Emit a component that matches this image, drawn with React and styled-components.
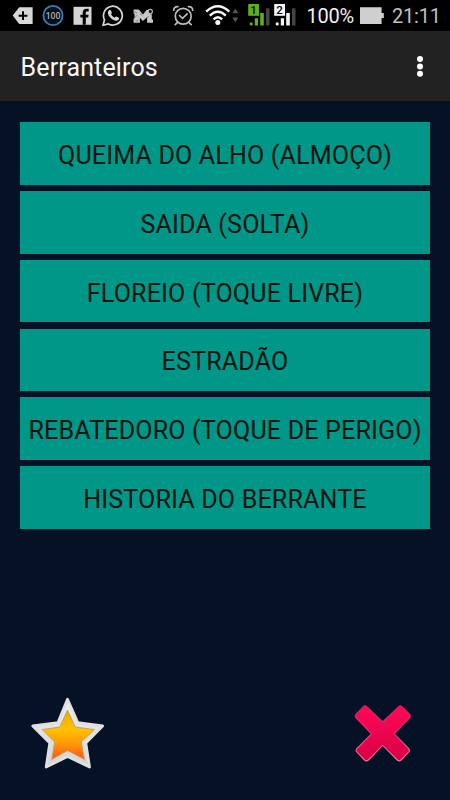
import React from "react";
import styled, { createGlobalStyle } from "styled-components";

const GlobalStyle = createGlobalStyle`
  * { box-sizing: border-box; }
  body { margin: 0; background: #051225; font-family: Roboto, "Liberation Sans", sans-serif; }
`;

const Screen = styled.div`
  width: 450px;
  height: 800px;
  display: flex;
  flex-direction: column;
  overflow: hidden;
  background: #051225;
`;

const StatusBar = styled.header`
  height: 31px;
  flex: none;
  display: flex;
  align-items: center;
  background: #000;
`;

const StatusIcon = styled.svg`
  flex: none;
  display: block;
  height: 31px;
  width: ${(p) => p.$w}px;
  margin-left: ${(p) => p.$gap}px;
`;

const StatusText = styled.span`
  flex: none;
  width: ${(p) => p.$w}px;
  margin-left: ${(p) => p.$gap}px;
  padding-top: 1px;
  font-size: 20px;
  line-height: 31px;
  letter-spacing: ${(p) => p.$track || 0}px;
  white-space: nowrap;
  color: ${(p) => p.$color};
`;

const AppBar = styled.div`
  height: 70px;
  flex: none;
  display: flex;
  align-items: center;
  justify-content: space-between;
  padding: 3px 24px 0 20.5px;
  background: #222;
`;

const Title = styled.h1`
  margin: 0;
  font-size: 25px;
  line-height: 30px;
  font-weight: 400;
  letter-spacing: 0.15px;
  color: #f8f8f8;
`;

const MenuButton = styled.button`
  display: block;
  padding: 0;
  border: 0;
  background: none;
  svg { display: block; }
`;

const List = styled.main`
  display: flex;
  flex-direction: column;
  gap: 6.25px;
  padding: 21.3px 20px 0;
`;

const ListButton = styled.button`
  height: 62.5px;
  padding: 5px 0 0;
  border: 0;
  background: #009688;
  color: #04140f;
  font-family: inherit;
  font-size: 25px;
  line-height: 30px;
  letter-spacing: 0.2px;
  white-space: nowrap;
  text-align: center;
`;

const Footer = styled.footer`
  margin-top: auto;
  display: flex;
  justify-content: space-between;
  padding: 0 36px 28px 28px;
`;

const items = [
  "QUEIMA DO ALHO (ALMOÇO)",
  "SAIDA (SOLTA)",
  "FLOREIO (TOQUE LIVRE)",
  "ESTRADÃO",
  "REBATEDORO (TOQUE DE PERIGO)",
  "HISTORIA DO BERRANTE",
];

const TagIcon = () => (
  <StatusIcon $w={21} $gap={12} viewBox="0 0 21 31">
    <path d="M7.2 7.3H20.6V24H7.2L.7 15.6Z" fill="#d8d8d8" />
    <path d="M11 11.3v8.8M6.6 15.7h8.8" stroke="#000" strokeWidth="2" />
  </StatusIcon>
);

const BatteryCircle = () => (
  <StatusIcon $w={22} $gap={8.5} viewBox="0 0 22 31">
    <circle cx="11" cy="15.5" r="9.6" fill="#030d16" stroke="#387eb4" strokeWidth="1.8" />
    <text x="11" y="18.6" textAnchor="middle" fontFamily="Roboto, sans-serif" fontSize="8.6" fontWeight="500" fill="#b4b2ae">100</text>
  </StatusIcon>
);

const FacebookIcon = () => (
  <StatusIcon $w={19} $gap={9.5} viewBox="0 0 19 31">
    <path d="M.5 6.8h18v18h-18z" fill="#d5d5d5" />
    <path d="M9.7 24.8v-7.2H7.4v-2.8h2.3v-2.1c0-2.8 1.5-4 3.9-4h2.1v2.9H14c-.9 0-1.2.5-1.2 1.3v1.9h2.8l-.4 2.8h-2.4v7.2z" fill="#050505" />
  </StatusIcon>
);

const WhatsappIcon = () => (
  <StatusIcon $w={22} $gap={9.5} viewBox="0 0 22 31">
    <path d="M1 25.3l1.5-5.4A9.4 9.4 0 1 1 6.4 23.9Z" fill="none" stroke="#d5d5d5" strokeWidth="1.7" strokeLinejoin="round" />
    <path d="M6.9 10.3c.8-.8 1.6-.7 2 .1l.9 2c.3.6-.4 1.2-.8 1.7.8 1.7 2 2.8 3.8 3.6.6-.5 1-1.4 1.7-1.1l2 1c.9.4.5 1.7-.1 2.3-3.6 3-10.9-3.4-10.5-7.4.1-.9.4-1.6 1-2.2Z" fill="#d5d5d5" />
  </StatusIcon>
);

const MLogo = () => (
  <StatusIcon $w={21} $gap={9} viewBox="0 0 21 31">
    <path d="M.6 9.6h5.2l4.2 4.8 3.6-4.3h1.6v2.8l2 1.4h1.6v5.2h1.2v3.3h-5.9v-5.6L9.8 21l-2.9-3.2v5H.6v-4.2h.9v-4.8H.6z" fill="#c8c8c8" />
    <path d="M1.2 11.8l3 1.2M4.1 15.2l-2 2M7 13.5l2.3 2.2M13.8 18l2.2-2M2.5 20.8h3" fill="none" stroke="#666" strokeWidth=".7" />
    <circle cx="17.3" cy="11.4" r="2.1" fill="#171717" stroke="#bdbdbd" strokeWidth="1.1" />
  </StatusIcon>
);

const AlarmIcon = () => (
  <StatusIcon $w={23} $gap={18} viewBox="0 0 23 31">
    <g fill="none" stroke="#bcbcbc" strokeWidth="1.7" strokeLinecap="round">
      <circle cx="11.2" cy="16.2" r="7.9" />
      <path d="M7.5 15.5l3 2.9 4.7-4.5M1.7 10.2c0-2.4 1.8-4 4.2-3.6M20.7 10.2c0-2.4-1.8-4-4.2-3.6M5.6 22.3l-2.4 2.3M16.8 22.3l2.4 2.3" />
    </g>
  </StatusIcon>
);

const WifiIcon = () => (
  <StatusIcon $w={35} $gap={10} viewBox="0 0 35 31">
    <g fill="none" stroke="#f7f7f7" strokeWidth="2.4">
      <path d="M1.2 11.7Q12.8 1 24.3 11.7M4.8 15.7Q12.8 8 20.8 15.7M8.5 19.3Q12.8 15 17.2 19.3" />
    </g>
    <circle cx="12.8" cy="22.5" r="2.5" fill="#fff" />
    <path d="M27.3 13.2l3-4.8 3 4.8zM27.3 17.4l3 4.9 3-4.9z" fill="#555" />
  </StatusIcon>
);

const SignalIcon = ({ sim, color, gap }) => (
  <StatusIcon $w={23} $gap={gap} viewBox="0 0 23 31">
    <path d="M18 8.3h3.5v17.2H18z" fill="#444" />
    <path d="M12.2 13h3.6v12.5h-3.6zM6.8 18.3h3.2v7.2H6.8z" fill={color} />
    <circle cx="3.2" cy="23.9" r="1.6" fill={color} />
    <path d="M.2 4h10.8v11.8H.2z" fill={color} />
    <text x="5.6" y="14" textAnchor="middle" fontFamily="Roboto, sans-serif" fontSize="11.5" fontWeight="500" fill="#050505">{sim}</text>
  </StatusIcon>
);

const BatteryIcon = () => (
  <StatusIcon $w={24} $gap={5} viewBox="0 0 24 31">
    <path d="M0 7.3h21.6v5.8h2.2v5h-2.2v6H0z" fill="#cfcfcf" />
  </StatusIcon>
);

const StarIcon = () => (
  <svg width="80" height="78" viewBox="0 0 80 78" aria-label="Favorito">
    <defs>
      <linearGradient id="starFill" x1="0" y1="0" x2="0" y2="1">
        <stop offset="0" stopColor="#e9ad00" />
        <stop offset=".4" stopColor="#ffc000" />
        <stop offset=".65" stopColor="#ff9d09" />
        <stop offset="1" stopColor="#ff5614" />
      </linearGradient>
      <linearGradient id="starEdge" x1="0" y1="0" x2="0" y2="1">
        <stop offset="0" stopColor="#f0f0ee" />
        <stop offset="1" stopColor="#d3d4d5" />
      </linearGradient>
    </defs>
    <path d="M39.5 5.2L49.8 28.6L74.6 32L57.8 49L61.5 73L39.6 62.5L18.2 73L21.8 49L4.8 32L30 28.6Z" fill="url(#starEdge)" stroke="#dfe0df" strokeWidth="2.8" strokeLinejoin="round" />
    <path d="M39.5 16L47.3 33L66.5 35.6L53.2 48L56.4 65.4L39.6 56.4L23.8 65.4L26.6 48L14.2 35.6L31.7 33Z" fill="url(#starFill)" stroke="#b69b63" strokeWidth=".8" />
  </svg>
);

const CloseIcon = () => (
  <svg width="62" height="78" viewBox="0 0 62 78" aria-label="Fechar">
    <defs>
      <linearGradient id="crossFill" x1="0" y1="0" x2="0" y2="1">
        <stop offset="0" stopColor="#ff0959" />
        <stop offset="1" stopColor="#d60043" />
      </linearGradient>
      <linearGradient id="crossEdge" x1="0" y1="0" x2="0" y2="1">
        <stop offset="0" stopColor="#e91458" />
        <stop offset=".5" stopColor="#e8346e" />
        <stop offset="1" stopColor="#dc7d9c" />
      </linearGradient>
    </defs>
    <path d="M11.3 12.5Q13.2 11 15 12.8L30.7 28L46.4 12.8Q48.3 11 50.2 12.8L57.5 20.2Q59.2 22 57.3 24L42.2 39.8L56.6 54.5Q58.4 56.4 56.6 58.2L49.1 66Q47.3 67.8 45.3 66L30.7 51.3L16.4 66Q14.4 67.8 12.5 66L5 58.2Q3.1 56.4 5 54.5L19.5 39.8L4.2 24Q2.4 22 4.2 20.2Z" fill="url(#crossFill)" stroke="url(#crossEdge)" strokeWidth="1.1" strokeLinejoin="round" />
  </svg>
);

export default function App() {
  return (
    <Screen>
      <GlobalStyle />
      <StatusBar>
        <TagIcon />
        <BatteryCircle />
        <FacebookIcon />
        <WhatsappIcon />
        <MLogo />
        <AlarmIcon />
        <WifiIcon />
        <SignalIcon sim="1" color="#61ad20" gap={8.5} />
        <SignalIcon sim="2" color="#f4f4f4" gap={3} />
        <StatusText $w={48} $gap={9.5} $track={-0.2} $color="#f0f0f0">100%</StatusText>
        <BatteryIcon />
        <StatusText $w={50} $gap={8.5} $track={-0.2} $color="#c0c0c0">21:11</StatusText>
      </StatusBar>
      <AppBar>
        <Title>Berranteiros</Title>
        <MenuButton aria-label="Menu">
          <svg width="12" height="24" viewBox="0 0 12 24" fill="#fff">
            <circle cx="6" cy="3" r="3" />
            <circle cx="6" cy="10.4" r="3" />
            <circle cx="6" cy="17.8" r="3" />
          </svg>
        </MenuButton>
      </AppBar>
      <List>
        {items.map((label) => (
          <ListButton key={label}>{label}</ListButton>
        ))}
      </List>
      <Footer>
        <StarIcon />
        <CloseIcon />
      </Footer>
    </Screen>
  );
}
